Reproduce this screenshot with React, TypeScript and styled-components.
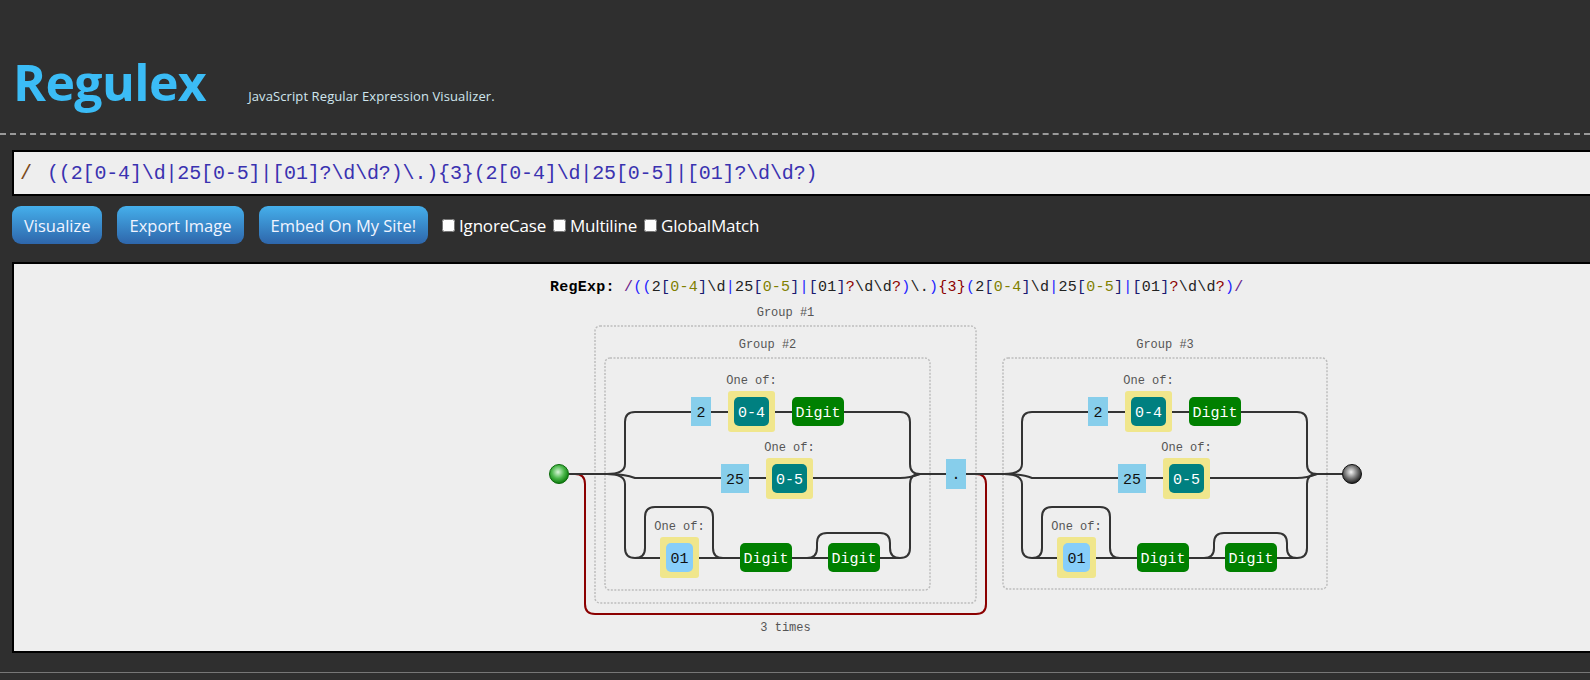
import styled, { createGlobalStyle } from 'styled-components';

const GlobalStyle = createGlobalStyle`
  html, body {
    margin: 0;
    padding: 0;
    background: #2f2f2f;
    overflow: hidden;
  }
  body {
    font-family: 'Open Sans', 'Noto Sans', sans-serif;
  }
`;

const Header = styled.header`
  height: 135px;
  box-sizing: border-box;
  display: flex;
  align-items: baseline;
  padding: 57px 0 0 13px;
  border-bottom: 2px dashed #999;
`;

const Title = styled.h1`
  margin: 0;
  font-size: 50px;
  line-height: 1;
  font-weight: 700;
  letter-spacing: -0.6px;
  color: #3bbcf6;
`;

const SubTitle = styled.span`
  margin-left: 42px;
  font-size: 13px;
  letter-spacing: 0.1px;
  color: #cfe6ee;
`;

const InputBox = styled.div`
  margin: 15px 0 0 12px;
  width: 1620px;
  height: 46px;
  box-sizing: border-box;
  border: 2px solid #000;
  background: #eee;
  display: flex;
  align-items: center;
  padding-left: 6px;
  font-family: 'Liberation Mono', monospace;
  font-size: 20px;
`;

const Slash = styled.span`
  color: #7a4a1a;
  width: 27px;
`;

const RegexText = styled.span`
  color: #3a32b0;
  letter-spacing: -0.15px;
`;

const Toolbar = styled.div`
  margin: 10px 0 0 12px;
  display: flex;
  align-items: center;
  gap: 15px;
`;

const Button = styled.button`
  height: 38px;
  padding: 0 12px;
  border: none;
  border-radius: 9px;
  background: linear-gradient(to bottom, #45afeb, #2e66ab);
  color: #f0f4ff;
  font-family: 'Open Sans', sans-serif;
  font-size: 16.5px;
  cursor: pointer;
`;

const Options = styled.div`
  display: flex;
  align-items: center;
  margin-left: -4px;
`;

const Option = styled.label`
  display: flex;
  align-items: center;
  color: #fff;
  font-size: 17px;
  letter-spacing: -0.2px;

  & + & {
    margin-left: 4px;
  }

  input {
    width: 13px;
    height: 13px;
    margin: 0 4px 0 3px;
  }
`;

const Canvas = styled.div`
  margin: 18px 0 0 12px;
  width: 1620px;
  height: 391px;
  box-sizing: border-box;
  border: 2px solid #000;
  background: #eee;
  overflow: hidden;
`;

const Footer = styled.div`
  margin-top: 19px;
  border-top: 1px solid #777;
  height: 10px;
`;

const Label = styled.text`
  font-family: 'Liberation Mono', monospace;
  font-size: 12px;
  fill: #555;
`;

const NodeText = styled.text<{ $light?: boolean }>`
  font-family: 'Liberation Mono', monospace;
  font-size: 15px;
  fill: ${(p) => (p.$light ? '#fff' : '#111')};
`;

const ExprLine = styled.text`
  font-family: 'Liberation Mono', monospace;
  font-size: 15px;
  letter-spacing: 0.24px;
  white-space: pre;
`;

const LINE = '#333';

const C = {
  delim: '#6a1b8a',
  group: '#1f1fff',
  lit: '#222',
  bracket: '#191970',
  range: '#808000',
  quant: '#8b0000',
};

const branchTokens: [string, string][] = [
  ['2', C.lit],
  ['[', C.bracket],
  ['0-4', C.range],
  [']', C.bracket],
  ['\\d', C.lit],
  ['|', C.group],
  ['25', C.lit],
  ['[', C.bracket],
  ['0-5', C.range],
  [']', C.bracket],
  ['|', C.group],
  ['[', C.bracket],
  ['01', C.lit],
  [']', C.bracket],
  ['?', C.quant],
  ['\\d\\d', C.lit],
  ['?', C.quant],
];

const tokens: [string, string][] = [
  ['/', C.delim],
  ['((', C.group],
  ...branchTokens,
  [')', C.group],
  ['\\.', C.lit],
  [')', C.group],
  ['{3}', C.quant],
  ['(', C.group],
  ...branchTokens,
  [')', C.group],
  ['/', C.delim],
];

function Literal({ x, y, w, h, text }: { x: number; y: number; w: number; h: number; text: string }) {
  return (
    <g>
      <rect x={x} y={y} width={w} height={h} fill="#87ceeb" />
      <NodeText x={x + w / 2} y={y + h / 2 + 5} textAnchor="middle">
        {text}
      </NodeText>
    </g>
  );
}

function Digit({ x, y }: { x: number; y: number }) {
  return (
    <g>
      <rect x={x} y={y} width={52} height={29} rx={5} fill="#008000" />
      <NodeText $light x={x + 26} y={y + 19.5} textAnchor="middle">
        Digit
      </NodeText>
    </g>
  );
}

function Charset({ x, y, w, text, range }: { x: number; y: number; w: number; text: string; range?: boolean }) {
  return (
    <g>
      <Label x={x + w / 2} y={y - 7.5} textAnchor="middle">
        One of:
      </Label>
      <rect x={x} y={y} width={w} height={41} rx={3} fill="#f0e68c" />
      <rect x={x + 6} y={y + 6} width={w - 12} height={29} rx={5} fill={range ? '#008080' : '#87cefa'} />
      <NodeText $light={range} x={x + w / 2} y={y + 25.5} textAnchor="middle">
        {text}
      </NodeText>
    </g>
  );
}

function Alternation({ dx }: { dx: number }) {
  return (
    <g transform={`translate(${dx},0)`}>
      <g fill="none" stroke={LINE} strokeWidth={2}>
        <path d="M607,474 Q625,474 625,464 L625,422 Q625,412 635,412 L900,412 Q910,412 910,422 L910,464 Q910,474 920,474" />
        <path d="M607,474 Q625,474 635,478 L900,478 Q910,478 920,474" />
        <path d="M607,474 Q625,474 625,484 L625,548 Q625,558 635,558 L900,558 Q910,558 910,548 L910,484 Q910,474 920,474" />
        <path d="M635,558 Q645,558 645,548 L645,517 Q645,507 655,507 L703,507 Q713,507 713,517 L713,548 Q713,558 723,558" />
        <path d="M807,558 Q817,558 817,548 L817,543 Q817,533 827,533 L880,533 Q890,533 890,543 L890,548 Q890,558 900,558" />
      </g>
      <Literal x={691} y={397} w={20} h={29} text="2" />
      <Charset x={728} y={391} w={47} text="0-4" range />
      <Digit x={792} y={397} />

      <Literal x={721} y={464} w={28} h={29} text="25" />
      <Charset x={766} y={458} w={47} text="0-5" range />

      <Charset x={660} y={537} w={39} text="01" />
      <Digit x={740} y={543} />
      <Digit x={828} y={543} />
    </g>
  );
}

function Diagram() {
  return (
    <svg width="1616" height="387" viewBox="14 264 1616 387">
      <defs>
        <radialGradient id="startFill" cx="45%" cy="40%" r="60%">
          <stop offset="0%" stopColor="#d8f5d8" />
          <stop offset="55%" stopColor="#4cb84c" />
          <stop offset="100%" stopColor="#0b7a0b" />
        </radialGradient>
        <radialGradient id="endFill" cx="45%" cy="40%" r="60%">
          <stop offset="0%" stopColor="#f4f4f4" />
          <stop offset="55%" stopColor="#777" />
          <stop offset="100%" stopColor="#1a1a1a" />
        </radialGradient>
      </defs>

      <ExprLine x={550} y={291}>
        <tspan fontWeight="bold" fill="#000">
          {'RegExp: '}
        </tspan>
        {tokens.map(([t, c], i) => (
          <tspan key={i} fill={c}>
            {t}
          </tspan>
        ))}
      </ExprLine>

      <g fill="none" strokeWidth={1.5} strokeDasharray="2,1.5" stroke="#bdbdbd">
        <rect x={595} y={326} width={381} height={277} rx={5} />
        <rect x={605} y={358} width={325} height={232} rx={5} />
        <rect x={1003} y={358} width={324} height={231} rx={5} />
      </g>
      <Label x={785.5} y={316} textAnchor="middle">
        Group #1
      </Label>
      <Label x={767.5} y={348} textAnchor="middle">
        Group #2
      </Label>
      <Label x={1165} y={348} textAnchor="middle">
        Group #3
      </Label>

      <path
        d="M575,474 Q585,474 585,484 L585,604 Q585,614 595,614 L976,614 Q986,614 986,604 L986,484 Q986,474 976,474"
        fill="none"
        stroke="#8b0000"
        strokeWidth={2}
      />
      <Label x={785.5} y={631} textAnchor="middle" fill="#333">
        3 times
      </Label>

      <g fill="none" stroke={LINE} strokeWidth={2}>
        <path d="M569,474 L608,474" />
        <path d="M919,474 L1005,474" />
        <path d="M1316,474 L1343,474" />
      </g>

      <Alternation dx={0} />
      <Alternation dx={397} />

      <Literal x={946} y={459} w={20} h={30} text="." />

      <circle cx={559} cy={474} r={9.5} fill="url(#startFill)" stroke="#0a6a0a" strokeWidth={1} />
      <circle cx={1352} cy={474} r={9.5} fill="url(#endFill)" stroke="#111" strokeWidth={1} />
    </svg>
  );
}

export default function App() {
  return (
    <>
      <GlobalStyle />
      <Header>
        <Title>Regulex</Title>
        <SubTitle>JavaScript Regular Expression Visualizer.</SubTitle>
      </Header>
      <InputBox>
        <Slash>/</Slash>
        <RegexText>{'((2[0-4]\\d|25[0-5]|[01]?\\d\\d?)\\.){3}(2[0-4]\\d|25[0-5]|[01]?\\d\\d?)'}</RegexText>
      </InputBox>
      <Toolbar>
        <Button>Visualize</Button>
        <Button>Export Image</Button>
        <Button>Embed On My Site!</Button>
        <Options>
          <Option>
            <input type="checkbox" />
            IgnoreCase
          </Option>
          <Option>
            <input type="checkbox" />
            Multiline
          </Option>
          <Option>
            <input type="checkbox" />
            GlobalMatch
          </Option>
        </Options>
      </Toolbar>
      <Canvas>
        <Diagram />
      </Canvas>
      <Footer />
    </>
  );
}
